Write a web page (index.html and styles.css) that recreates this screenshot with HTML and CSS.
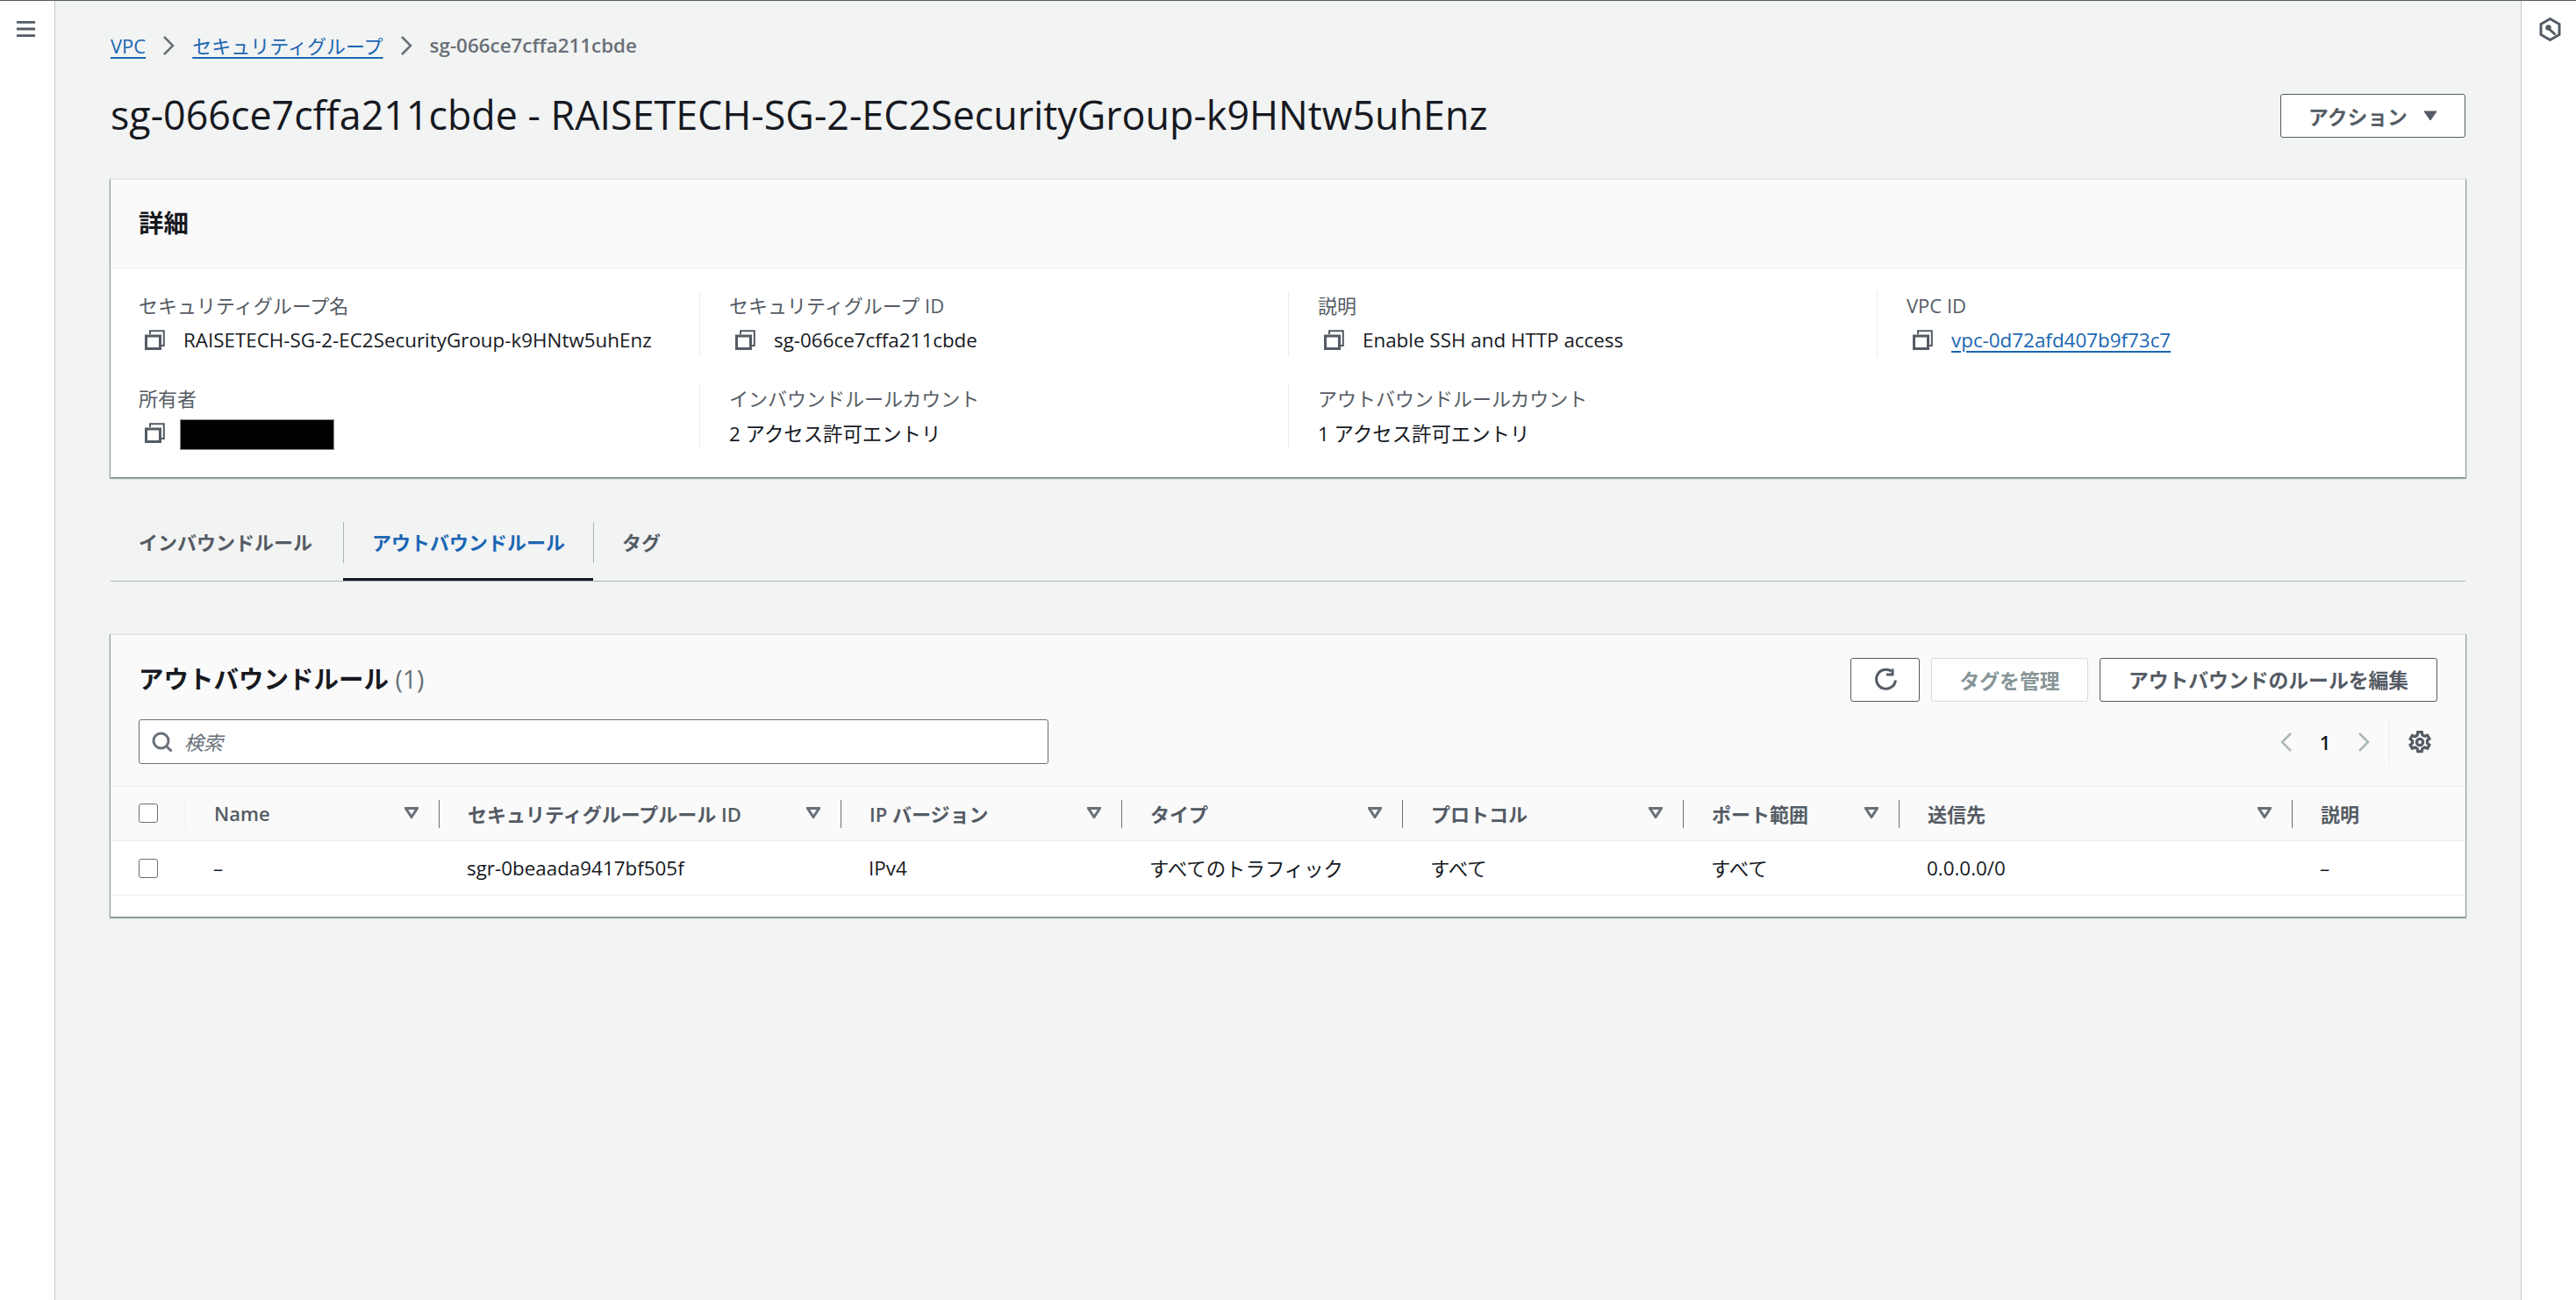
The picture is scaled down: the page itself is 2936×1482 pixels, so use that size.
FILE: index.html
```html
<!DOCTYPE html>
<html lang="ja">
<head>
	<meta charset="UTF-8">
	<title>sg-066ce7cffa211cbde</title>
	<link rel="stylesheet" href="styles.css">
</head>
<body>
	<svg class="defs" aria-hidden="true">
		<symbol id="i-copy" viewBox="0 0 23 23"><path class="copy-back" d="M6 5V1.200h15.800V18H18"/><path d="M1.500 7h16v14.500h-16z"/></symbol>
		<symbol id="i-filter" viewBox="0 0 16 13"><path d="M1.500 1.500h13L8 11.500z"/></symbol>
		<symbol id="i-right" viewBox="0 0 16 24"><path d="M3 2l10 10L3 22"/></symbol>
		<symbol id="i-left" viewBox="0 0 16 24"><path d="M13 2L3 12l10 10"/></symbol>
	</svg>

	<nav class="side side-left">
		<svg class="icon-menu" viewBox="0 0 24 20"><path d="M1 2h22M1 10h22M1 18h22"/></svg>
	</nav>

	<main class="content">
		<div class="crumbs">
			<a class="link">VPC</a>
			<svg class="crumb-sep"><use href="#i-right"/></svg>
			<a class="link">セキュリティグループ</a>
			<svg class="crumb-sep"><use href="#i-right"/></svg>
			<span class="crumb-current">sg-066ce7cffa211cbde</span>
		</div>

		<div class="page-head">
			<h1>sg-066ce7cffa211cbde - RAISETECH-SG-2-EC2SecurityGroup-k9HNtw5uhEnz</h1>
			<button class="btn btn-action">アクション<svg class="caret" viewBox="0 0 16 12"><path d="M1 1h14L8 11z"/></svg></button>
		</div>

		<section class="card">
			<div class="card-head"><h2>詳細</h2></div>
			<div class="details">
				<div class="cell">
					<div class="label">セキュリティグループ名</div>
					<div class="value"><svg class="copy"><use href="#i-copy"/></svg>RAISETECH-SG-2-EC2SecurityGroup-k9HNtw5uhEnz</div>
				</div>
				<div class="cell">
					<div class="label">セキュリティグループ ID</div>
					<div class="value"><svg class="copy"><use href="#i-copy"/></svg>sg-066ce7cffa211cbde</div>
				</div>
				<div class="cell">
					<div class="label">説明</div>
					<div class="value"><svg class="copy"><use href="#i-copy"/></svg>Enable SSH and HTTP access</div>
				</div>
				<div class="cell">
					<div class="label">VPC ID</div>
					<div class="value"><svg class="copy"><use href="#i-copy"/></svg><a class="link">vpc-0d72afd407b9f73c7</a></div>
				</div>
				<div class="cell">
					<div class="label">所有者</div>
					<div class="value"><svg class="copy copy-owner"><use href="#i-copy"/></svg><span class="redacted"></span></div>
				</div>
				<div class="cell">
					<div class="label">インバウンドルールカウント</div>
					<div class="value">2 アクセス許可エントリ</div>
				</div>
				<div class="cell">
					<div class="label">アウトバウンドルールカウント</div>
					<div class="value">1 アクセス許可エントリ</div>
				</div>
			</div>
		</section>

		<div class="tabs">
			<div class="tab"><span class="tab-text">インバウンドルール</span></div>
			<div class="tab tab-active"><span class="tab-text">アウトバウンドルール</span></div>
			<div class="tab"><span class="tab-text">タグ</span></div>
		</div>

		<section class="card card-table">
			<div class="table-head">
				<div class="table-title">
					<h2>アウトバウンドルール <span class="count">(1)</span></h2>
					<div class="actions">
						<button class="btn btn-icon"><svg class="icon-refresh" viewBox="0 0 28 26"><path d="M25.500 13.500a11 11 0 1 1-5-10.500"/><path d="M22 .5v6.500h-7"/></svg></button>
						<button class="btn btn-off">タグを管理</button>
						<button class="btn btn-edit">アウトバウンドのルールを編集</button>
					</div>
				</div>
				<div class="table-tools">
					<div class="search">
						<svg class="icon-search" viewBox="0 0 24 24"><circle cx="10.500" cy="10.500" r="8.500"/><path d="M16.500 16.500l6 6"/></svg>
						<span class="placeholder">検索</span>
					</div>
					<div class="pager">
						<svg class="pager-arrow"><use href="#i-left"/></svg>
						<span class="pager-num">1</span>
						<svg class="pager-arrow"><use href="#i-right"/></svg>
						<div class="pager-gear">
							<svg class="icon-gear" viewBox="0 0 16 16"><path d="M6.600 1h2.800l.4 2 1.500.9 2-.7 1.400 2.400-1.500 1.300v1.800l1.500 1.300-1.400 2.400-2-.7-1.500.9-.4 2H6.600l-.4-2-1.500-.9-2 .7-1.400-2.400 1.500-1.300V7.100L1.300 5.800l1.400-2.400 2 .7 1.500-.9z"/><circle cx="8" cy="8" r="2.200"/></svg>
						</div>
					</div>
				</div>
			</div>

			<div class="row row-head">
				<div class="col col-check"><span class="check"></span></div>
				<div class="col"><span>Name</span><svg class="filter"><use href="#i-filter"/></svg></div>
				<div class="col"><span>セキュリティグループルール ID</span><svg class="filter"><use href="#i-filter"/></svg></div>
				<div class="col"><span>IP バージョン</span><svg class="filter"><use href="#i-filter"/></svg></div>
				<div class="col"><span>タイプ</span><svg class="filter"><use href="#i-filter"/></svg></div>
				<div class="col"><span>プロトコル</span><svg class="filter"><use href="#i-filter"/></svg></div>
				<div class="col"><span>ポート範囲</span><svg class="filter"><use href="#i-filter"/></svg></div>
				<div class="col"><span>送信先</span><svg class="filter"><use href="#i-filter"/></svg></div>
				<div class="col col-last"><span>説明</span></div>
			</div>
			<div class="row row-body">
				<div class="col col-check"><span class="check"></span></div>
				<div class="col">–</div>
				<div class="col">sgr-0beaada9417bf505f</div>
				<div class="col">IPv4</div>
				<div class="col">すべてのトラフィック</div>
				<div class="col">すべて</div>
				<div class="col">すべて</div>
				<div class="col">0.0.0.0/0</div>
				<div class="col">–</div>
			</div>
		</section>
	</main>

	<aside class="side side-right">
		<svg class="icon-tool" viewBox="0 0 25 27"><path d="M12.500 1.500l10.500 6v12l-10.500 6-10.500-6v-12z"/><path d="M8.500 10.500l10 9" /><circle class="tool-dot" cx="10.500" cy="11.500" r="3.200"/></svg>
	</aside>
</body>
</html>
```
FILE: styles.css
```css
* {
	margin: 0;
	padding: 0;
	box-sizing: border-box;
}
html, body {
	height: 100%;
	overflow: hidden;
}
body {
	display: flex;
	border-top: 1px solid #545b64;
	background: #f2f3f3;
	color: #16191f;
	font-family: "Open Sans", "Noto Sans CJK JP", sans-serif;
	font-size: 22px;
}
svg {
	display: block;
	fill: none;
	stroke: currentColor;
}
.defs {
	width: 0;
	height: 0;
	position: absolute;
}
.link {
	color: #1a66b3;
	text-decoration: underline;
	text-decoration-thickness: 2px;
	text-underline-offset: 4px;
}

/* side bars */
.side {
	flex: none;
	background: #fff;
	color: #545b64;
}
.side-left {
	width: 63px;
	padding: 22px 0 0 18px;
	border-right: 1px solid #c6cacc;
}
.side-right {
	width: 63px;
	padding: 19px 0 0 20px;
	border-left: 1px solid #c6cacc;
}
.icon-menu {
	width: 23px;
	height: 20px;
	stroke-width: 3;
}
.icon-tool {
	width: 25px;
	height: 27px;
	stroke-width: 3;
}
.tool-dot {
	fill: currentColor;
	stroke: none;
}

/* main column */
.content {
	flex: 1;
	padding: 0 63px;
	min-width: 0;
}
.crumbs {
	display: flex;
	align-items: center;
	height: 34px;
	margin-top: 34px;
	line-height: 34px;
}
.crumb-sep {
	width: 16px;
	height: 24px;
	margin: 0 19px 0 18px;
	color: #687078;
	stroke-width: 2.500;
}
.crumb-current {
	color: #687078;
	font-size: 22.400px;
	font-weight: 600;
}
.page-head {
	display: flex;
	align-items: center;
	justify-content: space-between;
	height: 50px;
	margin-top: 38px;
}
h1 {
	font-size: 44.800px;
	font-weight: 400;
	line-height: 48px;
	padding-bottom: 2px;
	white-space: nowrap;
}
.btn {
	display: flex;
	align-items: center;
	justify-content: center;
	height: 50px;
	border: 1.500px solid #545b64;
	border-radius: 3px;
	background: #fff;
	color: #545b64;
	font-family: inherit;
	font-size: 22.800px;
	font-weight: 600;
}
.btn-action {
	width: 211px;
	gap: 18px;
}
.caret {
	width: 16px;
	height: 12px;
	fill: currentColor;
}

/* cards */
.card {
	margin-top: 47px;
	background: #fff;
	border-top: 1px solid #e6e8e8;
	box-shadow: 0 1px 1px 1px rgba(0, 28, 36, .3), 1px 1px 1px 0 rgba(0, 28, 36, .15), -1px 1px 1px 0 rgba(0, 28, 36, .15);
}
.card-head {
	height: 101px;
	padding: 0 32px;
	background: #fafafa;
	border-bottom: 1px solid #eaeded;
	line-height: 98px;
}
h2 {
	font-size: 28.500px;
	font-weight: 700;
}
.details {
	display: grid;
	grid-template-columns: 639px 671px 671px 671px;
	row-gap: 32px;
	padding: 26px 0 32px 32px;
}
.cell {
	height: 74px;
	padding-left: 33px;
	border-left: 1px solid #eaeded;
}
.cell:first-child, .cell:nth-child(5) {
	padding-left: 0;
	border-left: 0;
}
.label {
	height: 38px;
	color: #545b64;
	line-height: 32px;
}
.value {
	display: flex;
	align-items: center;
	height: 34px;
	font-size: 22.400px;
	white-space: nowrap;
}
.copy {
	flex: none;
	width: 23px;
	height: 23px;
	margin: 0 21px 0 7px;
	color: #545b64;
	stroke-width: 3;
}
.copy-back {
	stroke-width: 2;
}
.copy-owner {
	margin-right: 17px;
}
.redacted {
	width: 176px;
	height: 35px;
	margin-top: 4px;
	background: #000;
	border: 1px solid #888;
}

/* tabs */
.tabs {
	display: flex;
	height: 119px;
	padding-top: 52px;
	border-bottom: 1px solid #aab7b8;
}
.tab {
	display: flex;
	align-items: center;
	height: 66px;
	padding: 0 0 19px;
	color: #545b64;
	font-weight: 600;
	border-bottom: 3px solid transparent;
}
.tab-text {
	display: block;
	height: 47px;
	padding: 0 32px;
	border-left: 1px solid #aab7b8;
	line-height: 47px;
}
.tab:first-child .tab-text {
	border-left: 0;
}
.tab:first-child {
	padding-right: 3px;
}
.tab-active {
	color: #1a66b3;
	border-bottom-color: #16191f;
}

/* table card */
.card-table {
	margin-top: 60px;
	padding-bottom: 24px;
}
.table-head {
	height: 173px;
	padding: 26px 32px 0;
	background: #fafafa;
	border-bottom: 1px solid #eaeded;
}
.table-title {
	display: flex;
	align-items: center;
	justify-content: space-between;
	height: 50px;
}
.table-title h2 {
	padding-bottom: 5px;
}
.count {
	color: #687078;
	font-weight: 400;
}
.actions {
	display: flex;
	gap: 13px;
}
.btn-icon {
	width: 79px;
}
.icon-refresh {
	width: 28px;
	height: 26px;
	stroke-width: 3;
}
.btn-off {
	width: 179px;
	border-color: #d5dbdb;
	color: #879596;
}
.btn-edit {
	width: 385px;
	padding-bottom: 2px;
}
.table-tools {
	display: flex;
	align-items: center;
	justify-content: space-between;
	height: 51px;
	margin-top: 20px;
}
.search {
	display: flex;
	align-items: center;
	width: 1037px;
	height: 51px;
	padding-left: 14px;
	background: #fff;
	border: 1.500px solid #687078;
	border-radius: 3px;
}
.icon-search {
	width: 24px;
	height: 24px;
	color: #687078;
	stroke-width: 3;
}
.placeholder {
	margin-left: 13px;
	padding-bottom: 2px;
	color: #687078;
	font-style: italic;
}
.pager {
	display: flex;
	align-items: center;
	height: 50px;
	margin-right: 7px;
}
.pager-arrow {
	width: 16px;
	height: 24px;
	color: #aab7b8;
	stroke-width: 2.500;
}
.pager-num {
	width: 72px;
	text-align: center;
	font-weight: 600;
}
.pager-gear {
	display: flex;
	align-items: center;
	height: 50px;
	margin-left: 21px;
	padding-left: 21px;
	border-left: 1px solid #eaeded;
}
.icon-gear {
	width: 26px;
	height: 26px;
	color: #545b64;
	stroke-width: 2;
}
.row {
	display: grid;
	grid-template-columns: 85px 289px 458px 320px 320px 320px 246px 448px 198px;
	border-bottom: 1px solid #eaeded;
}
.row-head {
	height: 62px;
	background: #fafafa;
	align-items: center;
	color: #545b64;
	font-weight: 600;
}
.row-body {
	height: 62px;
	align-items: center;
	font-size: 22.400px;
}
.col {
	display: flex;
	align-items: center;
	justify-content: space-between;
	padding: 0 23px 0 32px;
	white-space: nowrap;
}
.row-head .col {
	height: 32px;
	padding-bottom: 2px;
	border-left: 1px solid #687078;
}
.row-head .col:nth-child(2) {
	border-left-color: #eaeded;
}
.row-head .col-check, .col-check {
	padding-left: 32px;
	border-left: 0;
}
.col-last {
	justify-content: flex-start;
}
.check {
	width: 22px;
	height: 22px;
	background: #fff;
	border: 1.500px solid #687078;
	border-radius: 3px;
}
.filter {
	flex: none;
	width: 16px;
	height: 13px;
	color: #687078;
	stroke-width: 3;
}
```
